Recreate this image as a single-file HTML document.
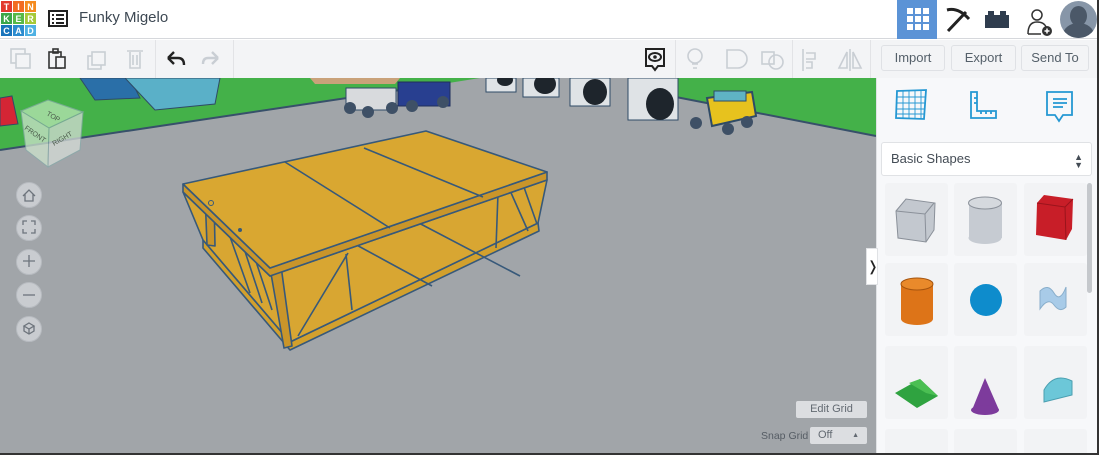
<!DOCTYPE html>
<html><head><style>
*{margin:0;padding:0;box-sizing:border-box}
html,body{width:1099px;height:455px;overflow:hidden}
body{font-family:"Liberation Sans",sans-serif;background:#fff;position:relative}
.abs{position:absolute}
.btn{position:absolute;top:45px;height:26px;border:1px solid #dfe1e5;border-radius:3px;background:#f3f4f6;font-size:13px;color:#55606a;text-align:center;line-height:24px}
.card{position:absolute;width:63px;height:73px;background:#f2f3f5;border-radius:3px}
.nav{position:absolute;left:16px;width:26px;height:26px;border-radius:50%;background:#c9ccd0;border:1px solid #b7bbc0}
</style></head><body>
<div class="abs" style="left:0;top:0;width:1099px;height:39px;background:#fff;border-bottom:1px solid #d6d8dc"></div>
<svg class="abs" style="left:0;top:0" width="40" height="40">
<rect x="1" y="1" width="11" height="11" fill="#e2382e"/><rect x="13" y="1" width="11" height="11" fill="#f26b22"/><rect x="25" y="1" width="11" height="11" fill="#f58b20"/>
<rect x="1" y="13" width="11" height="11" fill="#3ba648"/><rect x="13" y="13" width="11" height="11" fill="#57b947"/><rect x="25" y="13" width="11" height="11" fill="#a6c939"/>
<rect x="1" y="25" width="11" height="11" fill="#1a75bb"/><rect x="13" y="25" width="11" height="11" fill="#2c8ccf"/><rect x="25" y="25" width="11" height="11" fill="#4fb1e3"/>
<g font-size="9" font-weight="bold" fill="#fff" text-anchor="middle" font-family="Liberation Sans">
<text x="6.5" y="10">T</text><text x="18.5" y="10">I</text><text x="30.5" y="10">N</text>
<text x="6.5" y="22">K</text><text x="18.5" y="22">E</text><text x="30.5" y="22">R</text>
<text x="6.5" y="34">C</text><text x="18.5" y="34">A</text><text x="30.5" y="34">D</text></g></svg>
<svg class="abs" style="top:10px;left:48px" width="20" height="18"><rect x="1" y="1" width="18" height="15" fill="none" stroke="#222" stroke-width="2"/><g fill="#222"><rect x="4" y="4" width="2" height="2"/><rect x="8" y="4" width="8" height="2"/><rect x="4" y="8" width="2" height="2"/><rect x="8" y="8" width="8" height="2"/><rect x="4" y="12" width="2" height="2"/><rect x="8" y="12" width="8" height="2"/></g></svg>
<div class="abs" style="left:79px;top:9px;font-size:15px;color:#3d4853">Funky Migelo</div>
<div class="abs" style="left:897px;top:0;width:40px;height:39px;background:#5b93d6"></div>
<svg class="abs" style="left:907px;top:8px" width="22" height="22"><g fill="#fff"><rect x="0" y="0" width="6" height="6"/><rect x="8" y="0" width="6" height="6"/><rect x="16" y="0" width="6" height="6"/><rect x="0" y="8" width="6" height="6"/><rect x="8" y="8" width="6" height="6"/><rect x="16" y="8" width="6" height="6"/><rect x="0" y="16" width="6" height="6"/><rect x="8" y="16" width="6" height="6"/><rect x="16" y="16" width="6" height="6"/></g></svg>
<svg class="abs" style="left:944px;top:7px" width="28" height="26"><path d="M3 3 Q14 0 25 12 M22 5 L4 24" stroke="#222" stroke-width="3" fill="none"/></svg>
<svg class="abs" style="left:985px;top:10px" width="24" height="18"><rect x="0" y="5" width="24" height="13" fill="#2f3d4e"/><rect x="3" y="1" width="6" height="5" fill="#2f3d4e"/><rect x="15" y="1" width="6" height="5" fill="#2f3d4e"/></svg>
<svg class="abs" style="left:1026px;top:8px" width="28" height="28"><circle cx="11" cy="7" r="5" fill="none" stroke="#333" stroke-width="1.5"/><path d="M2 26 Q2 14 11 14 Q18 14 20 19" fill="none" stroke="#333" stroke-width="1.5"/><path d="M2 26 H15" stroke="#333" stroke-width="1.5"/><circle cx="21" cy="23" r="5" fill="#333"/><path d="M18.5 23h5M21 20.5v5" stroke="#fff" stroke-width="1.5"/></svg>
<div class="abs" style="left:1060px;top:1px;width:37px;height:37px;border-radius:50%;background:#8796a8;overflow:hidden"><div class="abs" style="left:10px;top:5px;width:17px;height:20px;border-radius:50%;background:#4b5868"></div><div class="abs" style="left:3px;top:22px;width:31px;height:24px;border-radius:50%;background:#4b5868"></div></div>
<div class="abs" style="left:0;top:40px;width:1099px;height:38px;background:#f3f4f6"></div>
<div class="abs" style="left:155px;top:40px;width:1px;height:38px;background:#e2e3e6"></div>
<div class="abs" style="left:233px;top:40px;width:1px;height:38px;background:#e2e3e6"></div>
<div class="abs" style="left:675px;top:40px;width:1px;height:38px;background:#e2e3e6"></div>
<div class="abs" style="left:792px;top:40px;width:1px;height:38px;background:#e2e3e6"></div>
<div class="abs" style="left:870px;top:40px;width:1px;height:38px;background:#e2e3e6"></div>
<svg class="abs" style="left:0;top:40px" width="240" height="38" fill="none" stroke-width="1.6">
<rect x="11" y="9" width="14" height="14" stroke="#c9ced4"/><rect x="16" y="14" width="14" height="14" stroke="#c9ced4" fill="#f3f4f6"/>
<rect x="49" y="12" width="12" height="16" stroke="#333"/><rect x="53" y="9" width="5" height="4" stroke="#333"/><rect x="56" y="17" width="9" height="11" stroke="#333" fill="#f3f4f6"/>
<rect x="88" y="16" width="13" height="13" stroke="#c9ced4"/><rect x="92" y="12" width="13" height="13" stroke="#c9ced4" fill="#f3f4f6"/>
<path d="M127 11h16M130 12v16h10V12M133 15v10M137 15v10" stroke="#c9ced4"/>
<path d="M168 18 L174 12 M168 18 L174 24 M168 18 H178 Q184 18 184 25" stroke="#222" stroke-width="2.4"/>
<path d="M218 18 L212 12 M218 18 L212 24 M218 18 H208 Q203 18 203 24" stroke="#c9ced4" stroke-width="2.4"/>
</svg>
<svg class="abs" style="left:640px;top:40px" width="230" height="38" fill="none" stroke="#c9ced4" stroke-width="1.6">
<path d="M6 9h18v17h-6l-3 4-3-4H6z" stroke="#222" stroke-width="2"/><ellipse cx="15" cy="17" rx="6" ry="4" stroke="#222" stroke-width="2"/><circle cx="15" cy="17" r="1.8" fill="#222" stroke="none"/>
<circle cx="55" cy="16" r="7"/><path d="M52 24h6M53 28h4"/>
<path d="M87 10h11a8 8 0 0 1 0 18h-11z"/>
<rect x="122" y="12" width="12" height="12"/><circle cx="136" cy="22" r="7"/>
<path d="M163 9v22M166 13h9v6h-9M166 22h6v6h-6"/>
<path d="M210 9v22M207 28V12l-8 16zM213 12l8 16h-8z"/>
</svg>
<div class="btn" style="left:881px;width:64px">Import</div>
<div class="btn" style="left:951px;width:65px">Export</div>
<div class="btn" style="left:1021px;width:68px">Send To</div>
<svg class="abs" style="left:0;top:78px" width="876" height="377">
<rect width="876" height="377" fill="#a1a5a9"/>
<polygon points="0,0 480,0 430,8 0,72" fill="#44b149"/>
<line x1="0" y1="72" x2="440" y2="6" stroke="#37506a" stroke-width="2"/>
<polygon points="640,0 876,0 876,58 640,12" fill="#44b149"/>
<line x1="640" y1="12" x2="876" y2="58" stroke="#37506a" stroke-width="2"/>
<polygon points="80,0 130,0 140,20 95,22" fill="#2a6fa8" stroke="#2f4b66"/>
<polygon points="125,0 220,0 215,26 155,32" fill="#5ab0c8" stroke="#2f4b66"/>
<polygon points="0,20 12,18 18,46 0,48" fill="#d42535" stroke="#2f4b66"/>
<polygon points="310,0 400,0 395,6 315,6" fill="#c9a27a"/>
<rect x="346" y="10" width="50" height="22" fill="#d8dadd" stroke="#2f4b66"/><circle cx="350" cy="30" r="6" fill="#3e5066"/><circle cx="368" cy="34" r="6" fill="#3e5066"/><circle cx="392" cy="30" r="6" fill="#3e5066"/>
<rect x="398" y="4" width="52" height="24" fill="#283f90" stroke="#1f2f5a"/><circle cx="412" cy="28" r="6" fill="#3e5066"/><circle cx="443" cy="24" r="6" fill="#3e5066"/>
<g fill="#dfe3e6" stroke="#2f4b66"><rect x="486" y="0" width="30" height="14"/><rect x="523" y="0" width="36" height="19"/><rect x="570" y="0" width="40" height="28"/><rect x="628" y="0" width="50" height="42"/></g>
<g fill="#1e252c"><ellipse cx="505" cy="2" rx="8" ry="6"/><ellipse cx="545" cy="6" rx="11" ry="10"/><ellipse cx="595" cy="14" rx="12" ry="13"/><ellipse cx="660" cy="26" rx="14" ry="16"/></g>
<polygon points="707,20 752,14 756,38 712,48" fill="#e7c21e" stroke="#2f4b66" stroke-width="2"/><rect x="714" y="13" width="32" height="10" fill="#5fb3c4" stroke="#2f4b66"/>
<circle cx="696" cy="45" r="6" fill="#3e5066"/><circle cx="728" cy="51" r="6" fill="#3e5066"/><circle cx="747" cy="44" r="6" fill="#3e5066"/>
<g stroke="#37597a" stroke-width="1.6" stroke-linejoin="round">
<polygon points="203,170 290,272 539,153 538,145 290,264 203,162" fill="#d2a02d"/>
<polygon points="203,162 290,264 538,145 547,102 270,198 183,114" fill="#d8a632"/>
<line x1="415" y1="143" x2="520" y2="198" transform="translate(0,0)"/>
<line x1="290" y1="198" x2="290" y2="264" stroke="none"/>
<line x1="340" y1="158" x2="432" y2="208"/>
<polygon points="270,190 281,188 292,268 284,270" fill="#c9952a"/>
<polygon points="205,115 214,118 215,168 207,167" fill="#c9952a"/>
<line x1="298" y1="258" x2="348" y2="175"/><line x1="346" y1="176" x2="352" y2="232"/>
<line x1="218" y1="125" x2="250" y2="215"/><line x1="230" y1="128" x2="262" y2="225"/><line x1="240" y1="135" x2="272" y2="232"/>
<line x1="498" y1="115" x2="496" y2="170"/><line x1="508" y1="108" x2="528" y2="153"/><line x1="520" y1="98" x2="537" y2="146"/>
<polygon points="183,106 270,190 547,94 547,102 270,198 183,114" fill="#c9952a"/>
<polygon points="183,106 426,53 547,94 270,190" fill="#d9a731"/>
<line x1="285" y1="84" x2="390" y2="150"/>
<line x1="364" y1="70" x2="483" y2="119"/>
</g>
<circle cx="211" cy="125" r="2.5" fill="none" stroke="#37597a"/><circle cx="240" cy="152" r="2" fill="#37597a"/>
<g opacity="0.75">
<polygon points="21,33 48,22 83,34 49,50" fill="#b9e6b4" stroke="#8aa"/>
<polygon points="21,33 49,50 48,89 26,72" fill="#cde3cc" stroke="#8aa"/>
<polygon points="49,50 83,34 80,72 48,89" fill="#d6dcd7" stroke="#8aa"/>
</g>
<text x="46" y="37" font-size="7" fill="#4a5a4a" transform="rotate(30 46 37)">TOP</text>
<text x="24" y="51" font-size="7" fill="#4a5a4a" transform="rotate(35 24 51)">FRONT</text>
<text x="54" y="68" font-size="7" fill="#4a5a4a" transform="rotate(-30 54 68)">RIGHT</text>
</svg>
<div class="nav" style="top:182px"></div><div class="nav" style="top:215px"></div><div class="nav" style="top:249px"></div><div class="nav" style="top:282px"></div><div class="nav" style="top:316px"></div>
<svg class="abs" style="left:16px;top:182px" width="26" height="160" fill="none" stroke="#6d747c" stroke-width="1.3">
<path d="M7 14l6-6 6 6M9 12v7h8v-7"/>
<path d="M7 43v-4h4M15 39h4v4M19 47v4h-4M11 51H7v-4"/>
<path d="M13 73v12M7 79h12"/>
<path d="M7 113h12"/>
<path d="M13 141l5 3-5 3-5-3zM8 144v5l5 3 5-3v-5M13 147v5"/>
</svg>
<div class="abs" style="left:796px;top:401px;width:71px;height:17px;background:#dcdee1;border-radius:2px;font-size:11px;color:#636a72;text-align:center;line-height:17px">Edit Grid</div>
<div class="abs" style="left:761px;top:430px;font-size:10.5px;color:#555c64">Snap Grid</div>
<div class="abs" style="left:810px;top:427px;width:57px;height:17px;background:#dcdee1;border-radius:2px;font-size:11px;color:#636a72;line-height:17px;padding-left:8px">Off<span style="position:absolute;right:8px;font-size:7px">▲</span></div>
<div class="abs" style="left:876px;top:78px;width:223px;height:377px;background:#f7f8fa;border-left:1px solid #e0e2e5;overflow:hidden">
<div class="card" style="left:8px;top:105px"></div><div class="card" style="left:77px;top:105px"></div><div class="card" style="left:147px;top:105px"></div>
<div class="card" style="left:8px;top:185px"></div><div class="card" style="left:77px;top:185px"></div><div class="card" style="left:147px;top:185px"></div>
<div class="card" style="left:8px;top:268px"></div><div class="card" style="left:77px;top:268px"></div><div class="card" style="left:147px;top:268px"></div>
<div class="card" style="left:8px;top:351px"></div><div class="card" style="left:77px;top:351px"></div><div class="card" style="left:147px;top:351px"></div>
</div>
<div class="abs" style="left:866px;top:248px;width:12px;height:37px;background:#fff;border:1px solid #e0e2e5;font-size:14px;line-height:35px;text-align:center;color:#222">❭</div>
<svg class="abs" style="left:890px;top:86px" width="200" height="42" fill="none" stroke="#2598d3" stroke-width="1.8">
<path d="M7 5l29-1-2 29-28-1z"/><path d="M13 5v27M19 5v27M25 5v27M31 5v27M7 11h28M7 17h28M7 23h28M7 28h28" stroke-width="0.9"/>
<path d="M81 6h6v19h19v7h-25z"/><path d="M84 12h3M84 17h3M91 25v3M96 25v3M101 25v3"/>
<path d="M157 6h25v23h-9l-4 6-4-6h-8z"/><path d="M163 13h14M163 17h14M163 21h10"/>
</svg>
<div class="abs" style="left:881px;top:142px;width:211px;height:34px;background:#fff;border:1px solid #e0e2e5;border-radius:3px;font-size:13px;color:#444c55;line-height:32px;padding-left:9px">Basic Shapes<span style="position:absolute;right:8px;font-size:9px;line-height:8px;top:10px">▲<br>▼</span></div>
<div class="abs" style="left:1087px;top:183px;width:5px;height:110px;background:#c5c8cc;border-radius:3px"></div>
<svg class="abs" style="left:884px;top:183px" width="205" height="245">
<polygon points="12,28 22,16 51,20 50,47 42,59 14,55" fill="#c3c8cf" stroke="#8a9099"/><path d="M12,28 L41,31 L50,20 M41,31 L42,59" stroke="#8a9099" fill="none"/>
<rect x="85" y="20" width="33" height="35" fill="#c6cbd2"/><ellipse cx="101" cy="20" rx="16.5" ry="6" fill="#d5d9de" stroke="#8a9099"/><ellipse cx="101" cy="55" rx="16.5" ry="6" fill="#c6cbd2"/>
<polygon points="153,20 160,12 189,16 188,46 182,57 152,52" fill="#c81e28"/><path d="M153,20 L181,24 L189,16 M181,24 L182,57" stroke="#9a141c" fill="none"/>
<rect x="17" y="101" width="32" height="35" fill="#dd7418"/><ellipse cx="33" cy="136" rx="16" ry="6" fill="#dd7418"/><ellipse cx="33" cy="101" rx="16" ry="6" fill="#e98a2b" stroke="#a5540e"/>
<circle cx="102" cy="117" r="16" fill="#0e8ccc"/>
<path d="M156,108 q8,-8 14,2 t12,-6 v20 q-6,6 -12,-2 t-14,4z" fill="#a8cbe8" stroke="#89aecb"/>
<polygon points="11,210 36,196 54,213 33,225" fill="#2fa340"/><polygon points="25,200 36,196 54,213 42,210" fill="#4bbf53"/>
<polygon points="101,195 115,227 88,227" fill="#7d3b9c"/><ellipse cx="101" cy="227" rx="14" ry="5" fill="#7d3b9c"/>
<path d="M160,219 v-12 q10,-18 28,-9 v14 z" fill="#6cc7d8" stroke="#4a9fb0"/>
</svg>
<div class="abs" style="left:0;top:453px;width:1099px;height:2px;background:#333"></div>
<div class="abs" style="left:1097px;top:0;width:2px;height:455px;background:#333"></div>
</body></html>
